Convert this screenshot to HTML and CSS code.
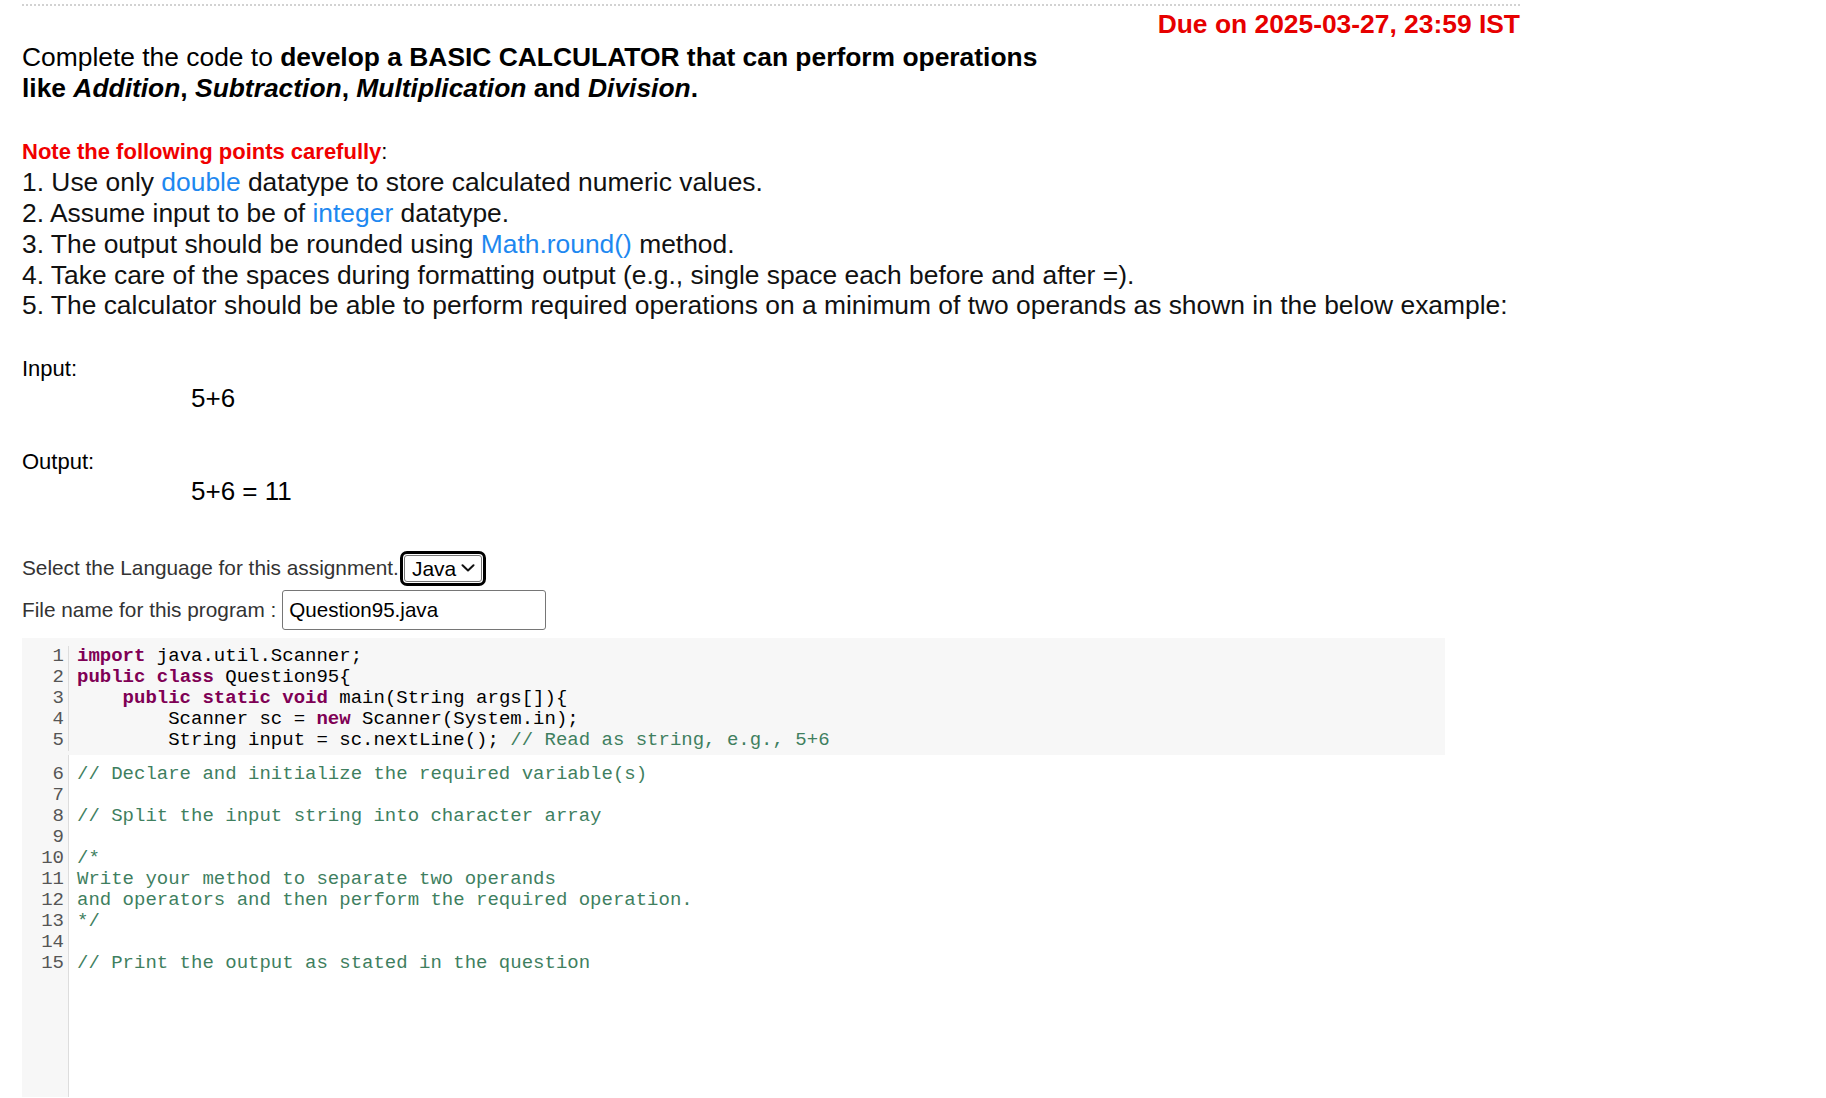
FILE: index.html
```html
<!DOCTYPE html>
<html lang="en">
<head>
<meta charset="utf-8">
<title>Basic Calculator Assignment</title>
<link rel="stylesheet" href="styles.css">
</head>
<body>
<div class="page">
  <div class="due">Due on 2025-03-27, 23:59 IST</div>
  <div class="heading">Complete the code to <b>develop a BASIC CALCULATOR that can perform operations</b><br><b>like <i>Addition</i>, <i>Subtraction</i>, <i>Multiplication</i> and <i>Division</i>.</b></div>

  <div class="notes">
    <div class="note-title"><b class="red">Note the following points carefully</b>:</div>
    <div class="note-line">1. Use only <span class="blue">double</span> datatype to store calculated numeric values.</div>
    <div class="note-line">2. Assume input to be of <span class="blue">integer</span> datatype.</div>
    <div class="note-line">3. The output should be rounded using <span class="blue">Math.round()</span> method.</div>
    <div class="note-line">4. Take care of the spaces during formatting output (e.g., single space each before and after =).</div>
    <div class="note-line">5. The calculator should be able to perform required operations on a minimum of two operands as shown in the below example:</div>
  </div>

  <div class="io-label first">Input:</div>
  <div class="io-value">5+6</div>
  <div class="io-label">Output:</div>
  <div class="io-value">5+6 = 11</div>

  <div class="form-row lang-row">
    <span class="form-label">Select the Language for this assignment.</span>
    <span class="select-wrap">
      <select class="lang-select"><option>Java</option></select>
      <svg class="chevron" width="14" height="8" viewBox="0 0 14 8"><path d="M1.5 1.2 L7 6.4 L12.5 1.2" fill="none" stroke="#111" stroke-width="2" stroke-linecap="round" stroke-linejoin="round"/></svg>
    </span>
  </div>
  <div class="form-row file-row">
    <span class="form-label">File name for this program :</span>
    <input class="file-input" type="text" value="Question95.java">
  </div>

  <div class="editor ro">
    <div class="gutter">
      <div>1</div><div>2</div><div>3</div><div>4</div><div>5</div>
    </div>
    <div class="lines">
<div class="line"><span class="kw">import</span> java.util.Scanner;</div>
<div class="line"><span class="kw">public</span> <span class="kw">class</span> Question95{</div>
<div class="line">    <span class="kw">public</span> <span class="kw">static</span> <span class="kw">void</span> main(String args[]){</div>
<div class="line">        Scanner sc = <span class="kw">new</span> Scanner(System.in);</div>
<div class="line">        String input = sc.nextLine(); <span class="cm">// Read as string, e.g., 5+6</span></div>
    </div>
  </div>
  <div class="editor rw">
    <div class="gutter">
      <div>6</div><div>7</div><div>8</div><div>9</div><div>10</div><div>11</div><div>12</div><div>13</div><div>14</div><div>15</div>
    </div>
    <div class="lines">
<div class="line"><span class="cm">// Declare and initialize the required variable(s)</span></div>
<div class="line"> </div>
<div class="line"><span class="cm">// Split the input string into character array</span></div>
<div class="line"> </div>
<div class="line"><span class="cm">/*</span></div>
<div class="line"><span class="cm">Write your method to separate two operands</span></div>
<div class="line"><span class="cm">and operators and then perform the required operation.</span></div>
<div class="line"><span class="cm">*/</span></div>
<div class="line"> </div>
<div class="line"><span class="cm">// Print the output as stated in the question</span></div>
    </div>
  </div>
</div>
</body>
</html>
```

FILE: styles.css
```css
html, body {
  margin: 0;
  padding: 0;
  background: #fff;
  overflow: hidden;
}

body {
  font-family: "Liberation Sans", Arial, sans-serif;
  color: #000;
}

.page {
  margin: 4px 0 0 22px;
  width: 1498px;
  border-top: 2px dotted #d2d2d2;
}

.due {
  margin-top: 2.5px;
  text-align: right;
  font-size: 26.4px;
  line-height: 30px;
  font-weight: bold;
  color: #e60000;
}

.heading {
  margin-top: 3.5px;
  font-size: 26.4px;
  line-height: 31px;
}

.notes {
  margin-top: 33.3px;
}

.note-title {
  font-size: 22px;
  line-height: 30px;
}

.red {
  color: #f00000;
}

.note-line {
  font-size: 26.4px;
  line-height: 30.8px;
  color: #111;
}

.blue {
  color: #1e88f0;
}

.io-label {
  margin-top: 36.5px;
  font-size: 22px;
  line-height: 26px;
}

.io-label.first {
  margin-top: 34.8px;
}

.io-value {
  margin-top: 2px;
  margin-left: 169px;
  font-size: 26px;
  line-height: 28px;
}

.form-row {
  display: flex;
  align-items: center;
}

.lang-row {
  margin-top: 50.3px;
}

.file-row {
  margin-top: 8px;
}

.form-label {
  font-size: 20.8px;
  line-height: 24px;
  color: #333;
}

.select-wrap {
  position: relative;
  display: inline-flex;
  margin-left: 5px;
}

.lang-select {
  -webkit-appearance: none;
  appearance: none;
  box-sizing: border-box;
  width: 78px;
  height: 27px;
  padding: 0 0 0 7px;
  font-family: "Liberation Sans", Arial, sans-serif;
  font-size: 21px;
  line-height: 25px;
  color: #000;
  background: #fff;
  border: 1px solid #767676;
  border-radius: 3px;
  outline: 3px solid #000;
  outline-offset: 1px;
}

.chevron {
  position: absolute;
  left: 57px;
  top: 9px;
  pointer-events: none;
}

.file-input {
  margin: 0 0 0 6px;
  box-sizing: border-box;
  width: 264px;
  height: 40px;
  padding: 0 6px;
  font-family: "Liberation Sans", Arial, sans-serif;
  font-size: 20.6px;
  color: #000;
  background: #fff;
  border: 1px solid #767676;
  border-radius: 3px;
}

.editor {
  display: flex;
  width: 1423px;
  font-family: "Liberation Mono", "DejaVu Sans Mono", monospace;
  font-size: 19px;
  line-height: 21px;
}

.editor.ro {
  margin-top: 8px;
  background: #f7f7f7;
  padding: 8.5px 0 4px;
}

.editor.rw {
  background: #fff;
  height: 342px;
}

.gutter {
  box-sizing: border-box;
  width: 47px;
  flex: none;
  padding-right: 4px;
  text-align: right;
  color: #555;
  background: #f7f7f7;
  border-right: 1px solid #dddddd;
}

.editor.rw .gutter {
  padding-top: 8.5px;
}

.lines {
  padding-left: 8px;
  flex: 1;
}

.editor.rw .lines {
  padding-top: 8.5px;
}

.line {
  white-space: pre;
  height: 21px;
}

.gutter div {
  height: 21px;
}

.kw {
  color: #7f0055;
  font-weight: bold;
}

.cm {
  color: #3f7f5f;
}
```
